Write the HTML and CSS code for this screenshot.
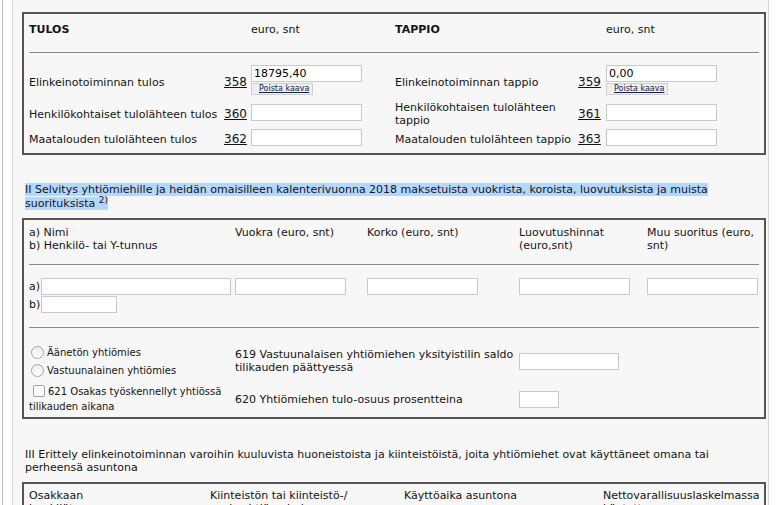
FILE: index.html
```html
<!DOCTYPE html>
<html lang="fi">
<head>
<meta charset="utf-8">
<title>Lomake</title>
<link rel="stylesheet" href="styles.css">
</head>
<body>
<div class="frame">
  <div class="outer">
    <div class="content">

      <div class="box box1">
        <div class="grid1">
          <div class="b">TULOS</div><div></div><div>euro, snt</div><div></div>
          <div class="b">TAPPIO</div><div></div><div>euro, snt</div>
          <div class="hr hr1"></div>

          <div class="lab">Elinkeinotoiminnan tulos</div>
          <a class="num lab">358</a>
          <div class="stack"><input class="inp w111" type="text" value="18795,40"><button class="poista">Poista kaava</button></div>
          <div></div>
          <div class="lab">Elinkeinotoiminnan tappio</div>
          <a class="num lab">359</a>
          <div class="stack"><input class="inp w111" type="text" value="0,00"><button class="poista">Poista kaava</button></div>

          <div class="lab">Henkilökohtaiset tulolähteen tulos</div>
          <a class="num lab">360</a>
          <div><input class="inp w111" type="text"></div>
          <div></div>
          <div class="lab">Henkilökohtaisen tulolähteen tappio</div>
          <a class="num lab">361</a>
          <div><input class="inp w111" type="text"></div>

          <div class="lab">Maatalouden tulolähteen tulos</div>
          <a class="num lab">362</a>
          <div><input class="inp w111" type="text"></div>
          <div></div>
          <div class="lab">Maatalouden tulolähteen tappio</div>
          <a class="num lab">363</a>
          <div><input class="inp w111" type="text"></div>
        </div>
      </div>

      <p class="section sec2"><span class="sel">II Selvitys yhtiömiehille ja heidän omaisilleen kalenterivuonna 2018 maksetuista vuokrista, koroista, luovutuksista ja muista suorituksista <sup>2)</sup></span></p>

      <div class="box box2">
        <div class="grid2">
          <div>a) Nimi<br>b) Henkilö- tai Y-tunnus</div>
          <div>Vuokra (euro, snt)</div>
          <div>Korko (euro, snt)</div>
          <div>Luovutushinnat (euro,snt)</div>
          <div>Muu suoritus (euro, snt)</div>
          <div class="hr hr2a"></div>

          <div class="ab"><span class="abl">a)</span><input class="inp w190" type="text"></div>
          <div><input class="inp w111" type="text"></div>
          <div><input class="inp w111" type="text"></div>
          <div><input class="inp w111" type="text"></div>
          <div><input class="inp w111" type="text"></div>
          <div class="ab rowb"><span class="abl">b)</span><input class="inp w75" type="text"></div>
          <div class="hr hr2b"></div>
        </div>

        <div class="lower">
          <div class="radios">
            <label class="rline"><input class="rad" type="radio" name="y">Äänetön yhtiömies</label>
            <label class="rline"><input class="rad" type="radio" name="y">Vastuunalainen yhtiömies</label>
          </div>
          <div>619 Vastuunalaisen yhtiömiehen yksityistilin saldo tilikauden päättyessä</div>
          <div><input class="inp w100" type="text"></div>

          <label class="cline"><input class="chk" type="checkbox">621 Osakas työskennellyt yhtiössä tilikauden aikana</label>
          <div>620 Yhtiömiehen tulo-osuus prosentteina</div>
          <div><input class="inp w40" type="text"></div>
        </div>
      </div>

      <p class="section sec3">III Erittely elinkeinotoiminnan varoihin kuuluvista huoneistoista ja kiinteistöistä, joita yhtiömiehet ovat käyttäneet omana tai perheensä asuntona</p>

      <div class="box box3">
        <div class="grid3">
          <div>Osakkaan<br>henkilötunnus</div>
          <div>Kiinteistön tai kiinteistö-/<br>osakeyhtiön nimi</div>
          <div>Käyttöaika asuntona</div>
          <div>Nettovarallisuuslaskelmassa<br>käytetty arvo</div>
        </div>
      </div>

    </div>
  </div>
</div>
</body>
</html>
```

FILE: styles.css
```css
html, body {
  margin: 0;
  background: #fff;
}
body {
  font-family: "DejaVu Sans", Verdana, sans-serif;
  font-size: 11px;
  line-height: 13px;
  color: #141414;
}
.frame {
  height: 505px;
  overflow: hidden;
  padding-left: 2px;
  display: flex;
}
.outer {
  border-left: 1px solid #c4c4c4;
  padding-left: 9px;
  height: 100%;
}
.content {
  box-sizing: border-box;
  width: 757px;
  height: 100%;
  border-left: 1px solid #dadada;
  border-right: 1px solid #d4d4d4;
  background: #f7f7f7;
  padding: 12px 0 0 9px;
}
.box {
  box-sizing: border-box;
  width: 744px;
  border: 2px solid #555;
}
.b { font-weight: bold; }
.hr {
  grid-column: 1 / -1;
  height: 1px;
  background: #8a8a8a;
}

/* box 1 */
.box1 { padding: 9px 5px 7px; }
.grid1 {
  display: grid;
  grid-template-columns: 195px 27px 111px 33px 183px 28px 1fr;
  row-gap: 4px;
  align-items: center;
}
.hr1 { margin: 12px 0 8px; }
.lab {
  padding-top: 2px;
  margin-bottom: -2px;
}
.num {
  font-size: 12px;
  text-decoration: underline;
  color: #141414;
}
.stack {
  display: flex;
  flex-direction: column;
  align-items: flex-start;
}
.inp {
  box-sizing: border-box;
  height: 17px;
  border: 1px solid #c9c9c9;
  background: #fff;
  padding: 0 2px;
  margin: 0;
  font-family: "DejaVu Sans", Verdana, sans-serif;
  font-size: 11px;
  color: #000;
  display: block;
  outline: none;
}
.w111 { width: 111px; }
.w190 { width: 190px; }
.w75 { width: 76px; }
.w100 { width: 100px; }
.w40 { width: 40px; }
.poista {
  margin-top: 1px;
  height: 12px;
  padding: 0 3px 0 7px;
  border: 1px solid #cfcfcf;
  background: #efefef;
  font-family: "DejaVu Sans", Verdana, sans-serif;
  font-size: 8px;
  line-height: 10px;
  color: #10205a;
  text-decoration: underline;
}

/* section headings */
.section {
  margin: 28px 2px 7px 3px;
  line-height: 13px;
}
.sec2 { line-height: 14px; }
.sec3 { margin: 29px 2px 8px 3px; }
.sel { background: #b3d7ff; }
.section sup {
  font-size: 9px;
  line-height: 0;
  vertical-align: 4px;
}

/* box 2 */
.box2 { padding: 6px 5px 3px; }
.grid2 {
  display: grid;
  grid-template-columns: 206px 132px 152px 128px 1fr;
  row-gap: 0;
}
.hr2a { margin: 12px 0 13px; }
.hr2b { margin: 14px 0 15px; }
.ab {
  display: flex;
  align-items: center;
}
.rowb { margin-top: 1px; grid-column: 1; }
.abl { width: 12px; }
.lower {
  display: grid;
  grid-template-columns: 206px 284px 1fr;
  row-gap: 5px;
  align-items: center;
}
.rline {
  display: flex;
  align-items: center;
  height: 18px;
  font-size: 10px;
}
.rad {
  appearance: none;
  -webkit-appearance: none;
  box-sizing: border-box;
  width: 13px;
  height: 13px;
  border: 1px solid #a3a3a3;
  border-radius: 50%;
  background: linear-gradient(#ececec, #fff);
  margin: 0 3px 0 2px;
  flex: none;
}
.cline {
  display: block;
  font-size: 10px;
  line-height: 15px;
}
.chk {
  appearance: none;
  -webkit-appearance: none;
  box-sizing: border-box;
  width: 12px;
  height: 12px;
  border: 1px solid #a3a3a3;
  border-radius: 2px;
  background: #fff;
  margin: 0 3px 0 4px;
  vertical-align: -2px;
}

/* box 3 */
.box3 { padding: 5px 5px 6px; }
.grid3 {
  display: grid;
  grid-template-columns: 181px 194px 199px 1fr;
}
```
